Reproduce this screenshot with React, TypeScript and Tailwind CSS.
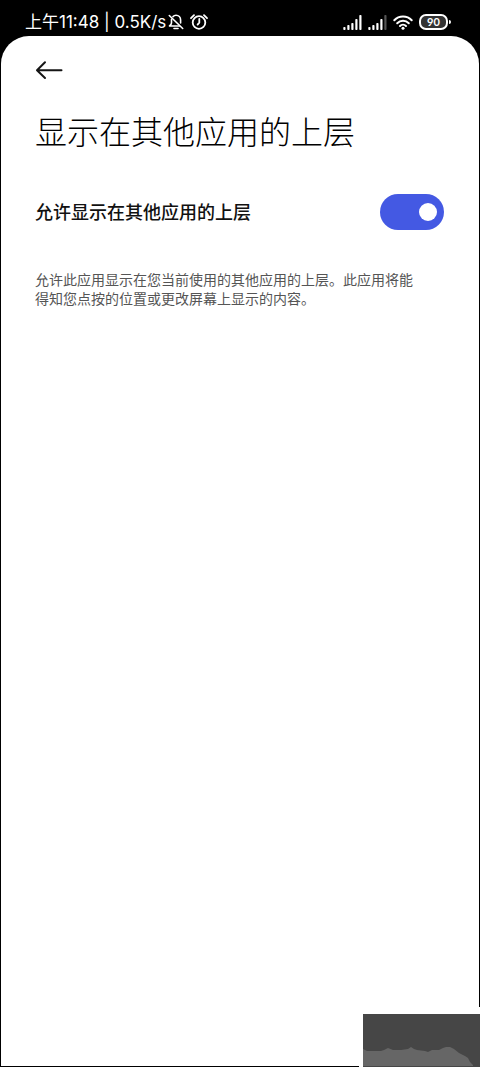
import { useState } from "react"

const content = {
  time: "上午11:48 | 0.5K/s",
  battery: "90",
  heading: "显示在其他应用的上层",
  label: "允许显示在其他应用的上层",
  description:
    "允许此应用显示在您当前使用的其他应用的上层。此应用将能得知您点按的位置或更改屏幕上显示的内容。",
}

const signalBars = [3, 5, 7, 11, 15]

function MutedBellIcon() {
  return (
    <svg
      viewBox="0 0 16 16"
      className="h-4 w-4"
      fill="none"
      stroke="currentColor"
      strokeWidth="1.6"
      strokeLinecap="round"
      strokeLinejoin="round"
      aria-hidden="true"
    >
      <path d="M5 2.600C5.900 1.600 7 1.300 8 1.300c2.700 0 4.600 2 4.600 4.700v3" />
      <path d="M3.500 5.200v3.800c0 1-.6 1.900-2 3h10" />
      <path d="M6 14.500h4" />
      <path d="M1.300 1.500l13.400 13" />
    </svg>
  )
}

function AlarmIcon() {
  return (
    <svg
      viewBox="0 0 18 16"
      className="h-4 w-[18px]"
      fill="none"
      stroke="currentColor"
      strokeWidth="1.8"
      strokeLinecap="round"
      strokeLinejoin="round"
      aria-hidden="true"
    >
      <circle cx="9" cy="8.500" r="6.300" />
      <path d="M9.300 5v3.700L7.600 10.600" />
      <path d="M1 4.200L4 1.200M17 4.200L14 1.200" />
    </svg>
  )
}

function SignalIcon({ strength }: { strength: number }) {
  return (
    <svg viewBox="0 0 19 16" className="h-4 w-[19px]" aria-hidden="true">
      {signalBars.map((height, index) => (
        <rect
          key={height}
          x={index * 4 + 0.3}
          y={16 - height}
          width="2.2"
          height={height}
          rx="0.8"
          fill={index < strength ? "#ffffff" : "#555555"}
        />
      ))}
    </svg>
  )
}

function WifiIcon() {
  return (
    <svg
      viewBox="0 0 20 15"
      className="h-[15px] w-5"
      fill="none"
      stroke="currentColor"
      strokeWidth="2"
      strokeLinecap="round"
      aria-hidden="true"
    >
      <path d="M1.300 5.200C6 .2 14 .2 18.700 5.200" />
      <path d="M4.200 8.200c3.200-3.300 8.400-3.300 11.600 0" />
      <path d="M7 11c1.700-1.700 4.300-1.700 6 0" />
      <circle cx="10" cy="13.200" r="1.500" fill="currentColor" stroke="none" />
    </svg>
  )
}

function Battery() {
  return (
    <div className="flex items-center gap-px">
      <span className="flex h-4 w-[29px] items-center justify-center rounded-[7px] border-2 border-white bg-[#333333] font-[Lato,sans-serif] text-[11px] leading-3 font-bold">
        {content.battery}
      </span>
      <span className="h-1 w-0.5 rounded-r-sm bg-white" />
    </div>
  )
}

function StatusBar() {
  return (
    <header className="flex h-9 items-center justify-between pt-2 pr-7 pl-6 text-white">
      <div className="flex items-center">
        <span className="text-[17px] leading-6">{content.time}</span>
        <div className="ml-0.5 flex items-center gap-1.5">
          <MutedBellIcon />
          <AlarmIcon />
        </div>
      </div>
      <div className="flex items-center gap-1.5">
        <SignalIcon strength={5} />
        <SignalIcon strength={4} />
        <WifiIcon />
        <Battery />
      </div>
    </header>
  )
}

function CornerThumbnail() {
  return (
    <div className="absolute right-0 bottom-0 bg-white pt-[7px] pl-1">
      <svg
        viewBox="0 0 117 53"
        className="block h-[53px] w-[117px]"
        aria-hidden="true"
      >
        <rect width="117" height="53" fill="#464646" />
        <path
          d="M0 35l4 2h14l3-1 4-2 5 2h8l7-1 3-2 3 2 3 1 8 1 3 1 4-2h7l4-2 3-1h4l4 2 5 4 6 3 3 2 2 4 3 3v1H0z"
          fill="#666666"
        />
      </svg>
    </div>
  )
}

export default function App() {
  const [allowed, setAllowed] = useState(true)

  return (
    <div className="relative flex min-h-screen flex-col bg-black px-px pb-px font-[Inter,'Noto_Sans_CJK_SC',sans-serif]">
      <StatusBar />

      <main className="flex-1 rounded-t-[28px] bg-white pt-6 pr-[35px] pl-[34px]">
        <button type="button" aria-label="返回" className="block text-[#151515]">
          <svg
            viewBox="0 0 28 20"
            className="h-5 w-7"
            fill="none"
            stroke="currentColor"
            strokeWidth="2"
            strokeLinecap="round"
            strokeLinejoin="round"
            aria-hidden="true"
          >
            <path d="M26.500 10.300H2.500M10 2.200L2 10.300l8 7.700" />
          </svg>
        </button>

        <h1 className="mt-[26px] font-['Noto_Sans_CJK_SC_Light','Noto_Sans_CJK_SC',sans-serif] text-[32px] leading-[48px] font-light text-black">
          {content.heading}
        </h1>

        <div className="mt-10 flex items-center justify-between">
          <label
            htmlFor="overlay-permission"
            className="pt-0.5 text-lg font-medium text-[#111111]"
          >
            {content.label}
          </label>
          <span className="relative flex">
            <input
              id="overlay-permission"
              type="checkbox"
              role="switch"
              checked={allowed}
              onChange={(e) => setAllowed(e.target.checked)}
              className="peer h-9 w-16 appearance-none rounded-full bg-gray-300 checked:bg-[#4459e3]"
            />
            <span className="pointer-events-none absolute top-[9px] left-[7px] h-[18px] w-[18px] rounded-full bg-white peer-checked:left-[39px]" />
          </span>
        </div>

        <p className="mt-10 pr-5 text-sm leading-[19px] text-[#555555]">
          {content.description}
        </p>
      </main>

      <CornerThumbnail />
    </div>
  )
}
